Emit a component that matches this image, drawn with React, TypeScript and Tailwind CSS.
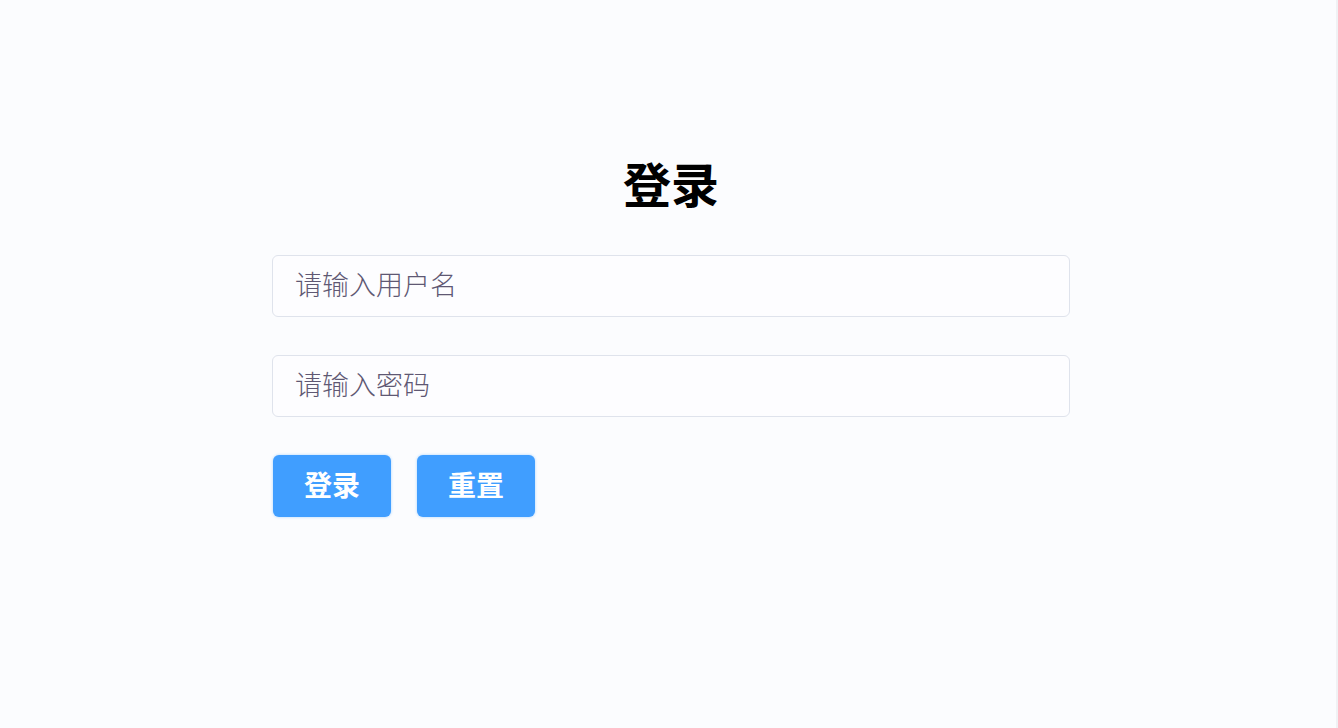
export default function App() {
  return (
    <div
      className="flex min-h-screen w-full justify-center border-r-2 border-[#f0f1f4] bg-[#fbfcfe] pl-[6px]"
      style={{ fontFamily: '"Noto Sans CJK SC", "Noto Sans", sans-serif' }}
    >
      <div className="flex w-[798px] flex-col pt-[149px]">
        {/* Title */}
        <h1 className="text-center text-[48px] font-bold leading-[66px] text-black">登录</h1>

        {/* Fields */}
        <div className="mt-[40px] flex flex-col gap-[38px]">
          <input
            type="text"
            placeholder="请输入用户名"
            className="h-[62px] w-full rounded-[6px] border border-[#dfe3ec] bg-[#fdfdff] px-[22px] pb-[5px] text-[27px] font-light text-[#606266] outline-none placeholder:text-[#5f5873]"
          />
          <input
            type="password"
            placeholder="请输入密码"
            className="h-[62px] w-full rounded-[6px] border border-[#dfe3ec] bg-[#fdfdff] px-[22px] pb-[5px] text-[27px] font-light text-[#606266] outline-none placeholder:text-[#5f5873]"
          />
        </div>

        {/* Buttons */}
        <div className="mt-[38px] flex gap-[26px] pl-[1px]">
          <button className="h-[62px] w-[118px] rounded-[6px] bg-[#409eff] pb-[4px] text-[28px] font-bold text-white shadow-[0_0_3px_#a9d3ff]">
            登录
          </button>
          <button className="h-[62px] w-[118px] rounded-[6px] bg-[#409eff] pb-[4px] text-[28px] font-bold text-white shadow-[0_0_3px_#a9d3ff]">
            重置
          </button>
        </div>
      </div>
    </div>
  );
}
